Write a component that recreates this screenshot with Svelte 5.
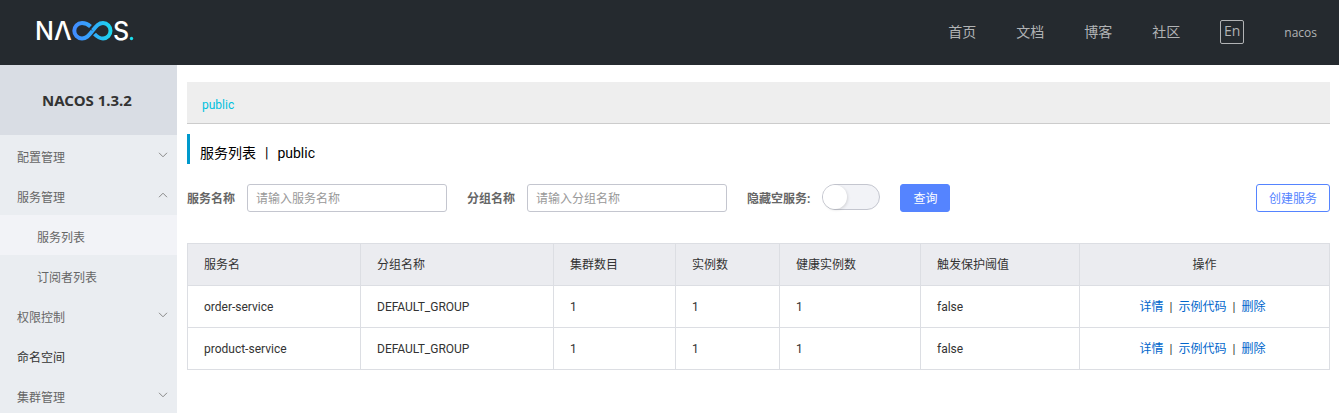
<script>
  const links = ['首页', '文档', '博客', '社区'];
  const columns = ['服务名', '分组名称', '集群数目', '实例数', '健康实例数', '触发保护阈值', '操作'];
  const widths = [173, 193, 122, 104, 141, 159, 250];
  const total = widths.reduce((a, b) => a + b, 0);
  const services = [
    { name: 'order-service', group: 'DEFAULT_GROUP', clusters: 1, instances: 1, healthy: 1, threshold: 'false' },
    { name: 'product-service', group: 'DEFAULT_GROUP', clusters: 1, instances: 1, healthy: 1, threshold: 'false' }
  ];
  let open = $state({ config: false, service: true, auth: false, cluster: false });
</script>

{#snippet group(key, label)}
  <button class="item" aria-expanded={open[key]} onclick={() => (open[key] = !open[key])}>
    <span>{label}</span>
    <svg class="arrow" class:up={open[key]} width="10" height="6" viewBox="0 0 10 6" aria-hidden="true">
      <path d="M1 .8 5 4.8 9 .8" fill="none" stroke="currentColor" />
    </svg>
  </button>
{/snippet}

<div class="app">
  <header>
    <a class="logo" href="#home" aria-label="NACOS">
      <svg width="106" height="40" viewBox="-4 -10 106 40">
        <defs>
          <linearGradient id="loop" gradientUnits="userSpaceOnUse" x1="37" y1="0" x2="76" y2="0">
            <stop offset="0" stop-color="#438bff" />
            <stop offset=".5" stop-color="#32a8fb" />
            <stop offset="1" stop-color="#1bd9ed" />
          </linearGradient>
        </defs>
        <g class="letters">
          <text x="-1" y="19">N</text>
          <text x="18" y="19">Λ</text>
          <text x="77" y="19">S</text>
        </g>
        <path
          d="M54.500 5.500C51.500 2.700 49 2 46 2C41.500 2 38.300 5.500 38.300 9.800C38.300 14 41.500 17.500 46 17.500C50.500 17.500 52.700 14.500 56.500 9.800C60.300 5 62.500 2 67 2C71.300 2 74.500 5.500 74.500 9.800C74.500 14 71.300 17.500 67 17.500C63.700 17.500 61.500 16.200 58.500 13"
          fill="none" stroke="url(#loop)" stroke-width="4" />
        <path d="M53.500 7 56 9.500" stroke="#252a2f" stroke-width="1" />
        <circle cx="95.500" cy="17.500" r="1.700" fill="#1bdcec" />
      </svg>
    </a>
    <nav>
      {#each links as link}
        <a href="#{link}">{link}</a>
      {/each}
      <button class="lang">En</button>
      <a class="user" href="#user">nacos</a>
    </nav>
  </header>

  <div class="body">
    <aside>
      <h1>NACOS 1.3.2</h1>
      {@render group('config', '配置管理')}
      {@render group('service', '服务管理')}
      {#if open.service}
        <a class="item sub active" href="#services">服务列表</a>
        <a class="item sub" href="#subscribers">订阅者列表</a>
      {/if}
      {@render group('auth', '权限控制')}
      <a class="item plain" href="#namespace">命名空间</a>
      {@render group('cluster', '集群管理')}
    </aside>

    <main>
      <div class="namespaces"><a href="#public">public</a></div>
      <h2><span>服务列表</span><span>|</span><span>public</span></h2>

      <form onsubmit={(e) => e.preventDefault()}>
        <div class="field">
          <label for="service-name">服务名称</label>
          <input id="service-name" type="text" placeholder="请输入服务名称" />
        </div>
        <div class="field">
          <label for="group-name">分组名称</label>
          <input id="group-name" type="text" placeholder="请输入分组名称" />
        </div>
        <div class="field">
          <label for="hide-empty">隐藏空服务:</label>
          <input id="hide-empty" class="switch" type="checkbox" role="switch" />
        </div>
        <button class="btn primary" type="submit">查询</button>
        <button class="btn create" type="button">创建服务</button>
      </form>

      <table>
        <colgroup>
          {#each widths as w}
            <col style="width: {(w / total) * 100}%" />
          {/each}
        </colgroup>
        <thead>
          <tr>
            {#each columns as column}
              <th scope="col">{column}</th>
            {/each}
          </tr>
        </thead>
        <tbody>
          {#each services as s}
            <tr>
              <td>{s.name}</td>
              <td>{s.group}</td>
              <td>{s.clusters}</td>
              <td>{s.instances}</td>
              <td>{s.healthy}</td>
              <td>{s.threshold}</td>
              <td>
                <div class="actions">
                  <a href="#detail">详情</a><span>|</span><a href="#code">示例代码</a><span>|</span><a href="#delete">删除</a>
                </div>
              </td>
            </tr>
          {/each}
        </tbody>
      </table>
    </main>
  </div>
</div>

<style>
  :global(body) {
    margin: 0;
    overflow: hidden;
  }
  .app {
    min-height: 100vh;
    display: flex;
    flex-direction: column;
    background: #fff;
    color: #333;
    font: 12px/20px Roboto, 'Noto Sans CJK SC', sans-serif;
  }
  .app * {
    box-sizing: border-box;
  }
  a {
    text-decoration: none;
    color: inherit;
  }
  button,
  input {
    font: inherit;
    margin: 0;
  }
  button {
    cursor: pointer;
  }
  header {
    display: flex;
    align-items: center;
    justify-content: space-between;
    height: 65px;
    padding: 0 22px 0 32px;
    background: #252a2f;
    color: #b1b3b5;
  }
  .logo svg {
    display: block;
    margin-bottom: 4px;
  }
  .letters {
    font: 500 25px Inter, sans-serif;
    fill: #fff;
  }
  nav {
    display: flex;
    align-items: center;
    gap: 40px;
    font-size: 14px;
    line-height: 24px;
  }
  nav a {
    padding-bottom: 2px;
  }
  .lang {
    width: 24px;
    height: 24px;
    margin-bottom: 2px;
    padding: 0 0 2px;
    border: 1px solid #b1b3b5;
    border-radius: 2px;
    background: none;
    color: inherit;
    font: 500 14px/20px 'Open Sans', sans-serif;
  }
  nav .user {
    padding: 0;
    font: 500 12px/20px 'Open Sans', sans-serif;
  }
  .body {
    flex: 1;
    display: flex;
  }
  aside {
    width: 177px;
    flex: none;
    background: #eaedf1;
  }
  h1 {
    margin: 0;
    padding-right: 3px;
    font: bold 15px/70px 'Noto Sans', sans-serif;
    text-align: center;
    background: #d9dde4;
  }
  .item {
    display: flex;
    align-items: center;
    justify-content: space-between;
    width: 100%;
    height: 40px;
    padding: 6px 9px 0 17px;
    border: 0;
    background: none;
    color: #666;
  }
  .sub {
    padding-left: 37px;
  }
  .active {
    background: #f2f3f7;
  }
  .plain {
    color: #333;
  }
  .arrow {
    margin-bottom: 6px;
    color: #888;
  }
  .up {
    transform: scaleY(-1);
  }
  main {
    flex: 1;
    min-width: 0;
    padding: 17px 9px 0 10px;
  }
  .namespaces {
    height: 42px;
    padding: 13px 15px 0;
    background: #eee;
    border-bottom: 1px solid #ccc;
    color: #00c1de;
  }
  h2 {
    display: flex;
    gap: 9px;
    height: 30px;
    margin: 10px 0 20px;
    padding: 9px 0 0 10px;
    border-left: 3px solid #09c;
    font-size: 14px;
    font-weight: 400;
    color: #000;
  }
  form {
    display: flex;
    align-items: center;
    gap: 20px;
    margin-bottom: 31px;
  }
  .field {
    display: flex;
    align-items: center;
    gap: 12px;
  }
  label {
    padding-top: 2px;
    color: #666;
    font-weight: 700;
  }
  input[type='text'] {
    width: 200px;
    height: 28px;
    padding: 2px 8px 0;
    border: 1px solid #c4c6cf;
    border-radius: 3px;
    background: #fff;
    outline: 0;
  }
  input::placeholder {
    color: #999;
    opacity: 1;
  }
  .switch {
    appearance: none;
    display: flex;
    width: 58px;
    height: 26px;
    margin-bottom: 2px;
    border: 1px solid #c4c6cf;
    border-radius: 13px;
    background: #f2f3f7;
  }
  .switch::before {
    content: '';
    width: 24px;
    height: 24px;
    border-radius: 50%;
    background: #fff;
    box-shadow: 1px 1px 3px rgba(0, 0, 0, 0.12);
  }
  .switch:checked {
    justify-content: flex-end;
    background: #5584ff;
  }
  .btn {
    height: 28px;
    padding: 2px 12px 0;
    border: 1px solid #5584ff;
    border-radius: 3px;
    background: #fff;
    color: #5584ff;
  }
  .primary {
    background: #5584ff;
    color: #fff;
  }
  .create {
    margin-left: auto;
  }
  table {
    width: 100%;
    table-layout: fixed;
    border-collapse: collapse;
  }
  th,
  td {
    height: 42px;
    padding: 0 16px;
    border: 1px solid #dcdee3;
    font-weight: 400;
    text-align: left;
  }
  th {
    background: #ebecf0;
  }
  th:last-child {
    text-align: center;
  }
  .actions {
    display: flex;
    justify-content: center;
    gap: 6px;
    padding-right: 4px;
  }
  .actions a {
    color: #06c;
  }
</style>
